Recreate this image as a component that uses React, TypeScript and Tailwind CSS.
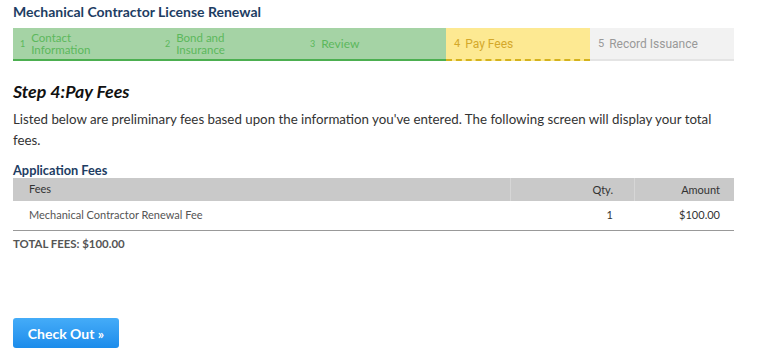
import React from "react";

const lato = { fontFamily: "Lato, 'Open Sans', sans-serif" };

export default function App() {
  return (
    <div className="w-[757px] h-[358px] bg-white font-['Lato',sans-serif] text-[#333]">
      <div className="pl-[13px] pr-[23px] pt-[3px]">
        <h1 className="text-[14px] font-bold text-[#1d3d63] leading-[18px]">
          Mechanical Contractor License Renewal
        </h1>
        {/* step bar */}
        <div className="mt-[7px] flex h-[33px] w-[721px]">
          <div className="flex w-[144px] items-center gap-[6px] border-b-2 border-[#4caf50] bg-[#a5d3a5] pl-[7px] text-[#5cb85c]">
            <span className="text-[9px] leading-none">1</span>
            <span className="text-[11.5px] leading-[12px]">Contact<br />Information</span>
          </div>
          <div className="flex w-[144px] items-center gap-[6px] border-b-2 border-[#4caf50] bg-[#a5d3a5] pl-[8px] text-[#5cb85c]">
            <span className="text-[9px] leading-none">2</span>
            <span className="text-[11.5px] leading-[12px]">Bond and<br />Insurance</span>
          </div>
          <div className="flex w-[145px] items-center gap-[6px] border-b-2 border-[#4caf50] bg-[#a5d3a5] pl-[9px] text-[#5cb85c]">
            <span className="text-[9px] leading-none">3</span>
            <span className="text-[12px] leading-none">Review</span>
          </div>
          <div className="flex w-[144px] items-center gap-[5px] border-b-2 border-dashed border-[#d4b21c] bg-[#fde992] pl-[8px] font-['Roboto',sans-serif] text-[#d4a82a]">
            <span className="text-[11px] leading-none">4</span>
            <span className="text-[12px] leading-none">Pay Fees</span>
          </div>
          <div className="flex w-[144px] items-center gap-[5px] border-b-2 border-[#e4e4e4] bg-[#f2f2f2] pl-[8px] font-['Roboto',sans-serif] text-[#999]">
            <span className="text-[11px] leading-none">5</span>
            <span className="text-[12px] leading-none">Record Issuance</span>
          </div>
        </div>

        <h2 className="mt-[19px] text-[17.8px] font-bold italic leading-[22px] text-[#111]">
          Step 4:Pay Fees
        </h2>
        <p className="mt-[7px] text-[13.3px] leading-[21px] text-[#333]">
          Listed below are preliminary fees based upon the information you've entered. The following screen will display your total fees.
        </p>
        <h3 className="mt-[11px] text-[12.8px] font-bold leading-[16px] text-[#1d3d63]" style={lato}>
          Application Fees
        </h3>
        <div className="w-[721px]">
          <div className="flex h-[23px] items-center bg-[#c9c9c9] text-[11px] text-[#333]">
            <div className="flex-1 pl-[16px]">Fees</div>
            <div className="h-full w-[124px] border-l border-[#d6d6d6] pr-[21px] text-right leading-[23px]">Qty.</div>
            <div className="h-full w-[100px] border-l border-[#d6d6d6] pr-[14px] text-right leading-[23px]">Amount</div>
          </div>
          <div className="flex h-[30px] items-center border-b border-[#999] text-[11px] text-[#555]">
            <div className="flex-1 pl-[16px]">Mechanical Contractor Renewal Fee</div>
            <div className="w-[124px] pr-[21px] text-right text-[#333]">1</div>
            <div className="w-[100px] pr-[14px] text-right text-[#333]">$100.00</div>
          </div>
        </div>
        <div className="mt-[4px] text-[11.4px] font-bold text-[#555]">TOTAL FEES: $100.00</div>

        <button className="mt-[66px] h-[30px] w-[106px] rounded-[3px] bg-gradient-to-b from-[#44acf8] to-[#1b8ceb] text-[14px] font-bold text-white">
          Check Out »
        </button>
      </div>
    </div>
  );
}
